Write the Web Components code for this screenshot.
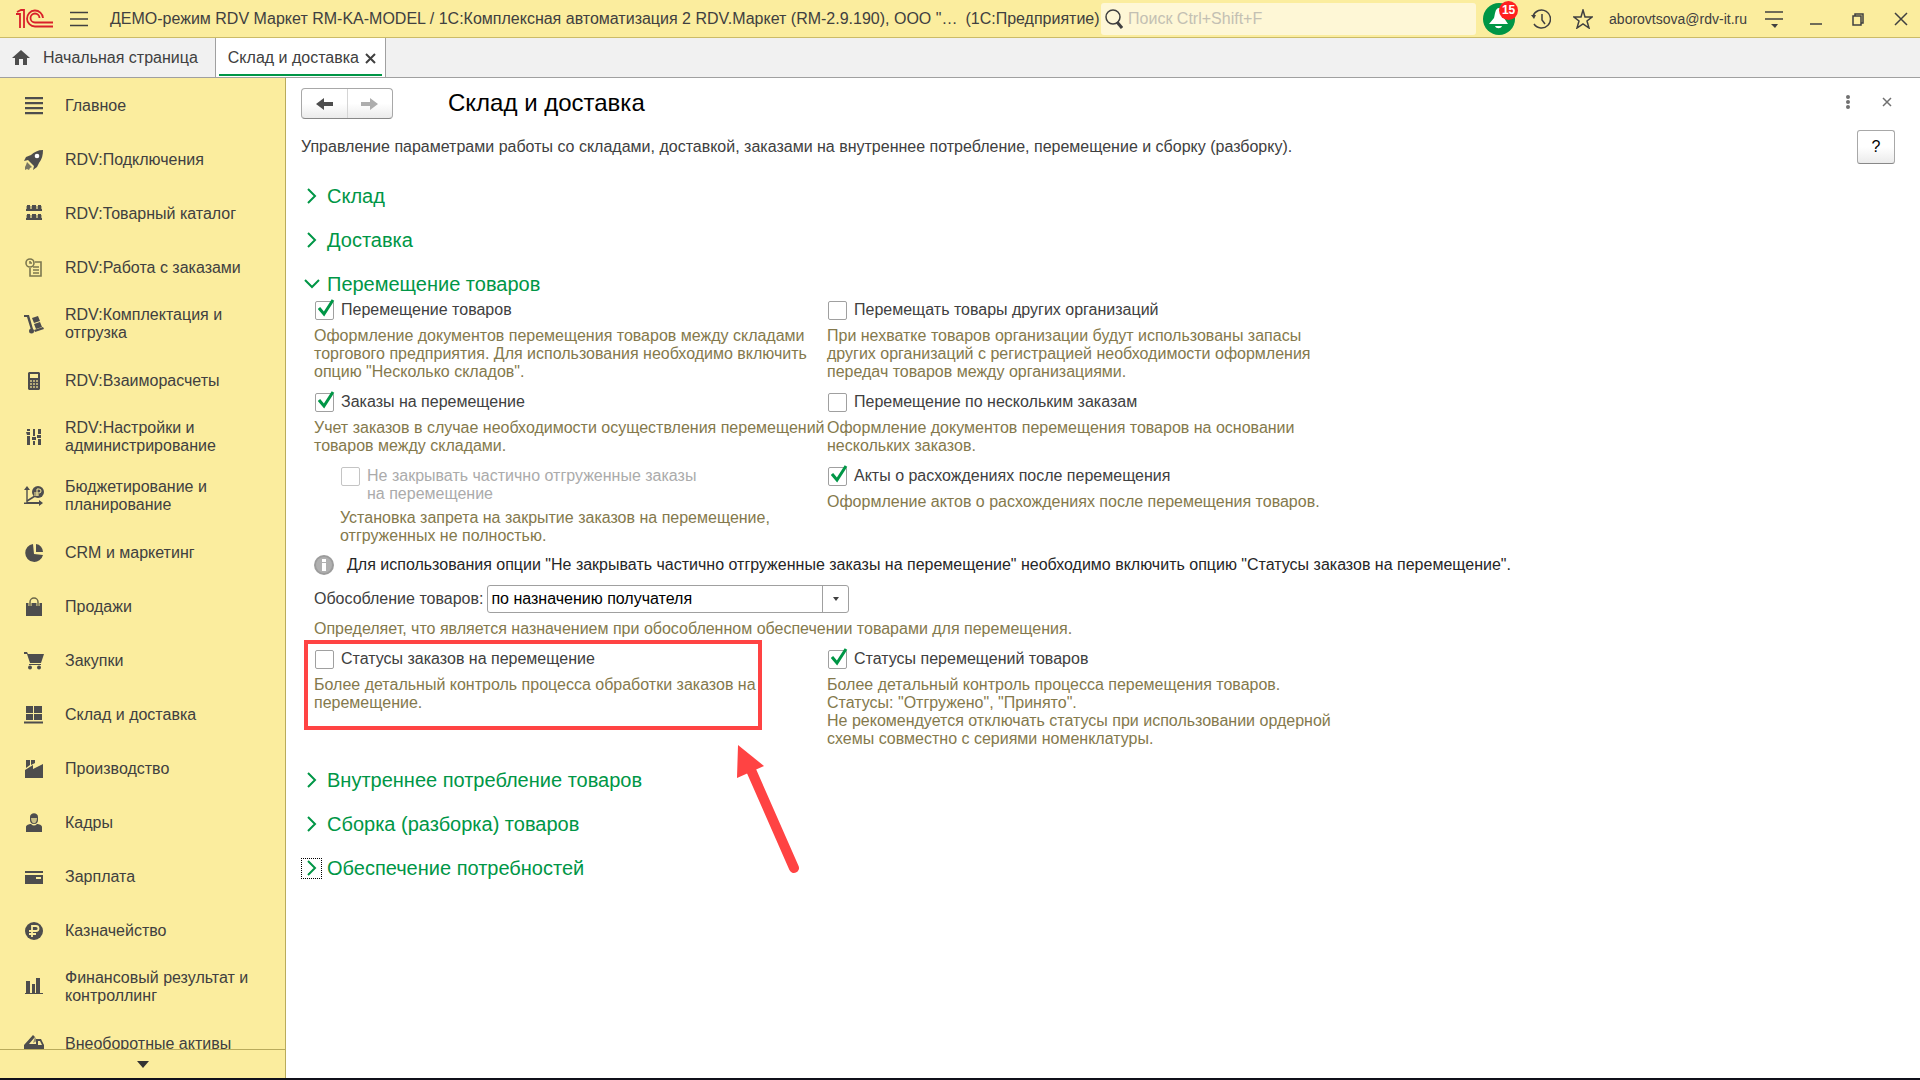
<!DOCTYPE html>
<html lang="ru">
<head>
<meta charset="utf-8">
<title>Склад и доставка</title>
<style>
  html, body { height: 100%; margin: 0; }
  body {
    font: 16px/18px "Liberation Sans", Arial, sans-serif;
    color: #404040;
    background: #fff;
  }
</style>
</head>
<body>
<app-shell>
  <title-bar slot="title" user="aborovtsova@rdv-it.ru" count="15">
    <span>ДЕМО-режим RDV Маркет RM-KA-MODEL / 1С:Комплексная автоматизация 2 RDV.Маркет (RM-2.9.190), ООО "…</span>
    <span>(1С:Предприятие)</span>
  </title-bar>

  <tab-bar slot="tabs">
    <tab-item icon="home">Начальная страница</tab-item>
    <tab-item active>Склад и доставка</tab-item>
  </tab-bar>

  <side-nav slot="nav">
    <nav-item icon="list">Главное</nav-item>
    <nav-item icon="rocket">RDV:Подключения</nav-item>
    <nav-item icon="shelves">RDV:Товарный каталог</nav-item>
    <nav-item icon="orders">RDV:Работа с заказами</nav-item>
    <nav-item icon="trolley">RDV:Комплектация и отгрузка</nav-item>
    <nav-item icon="calculator">RDV:Взаиморасчеты</nav-item>
    <nav-item icon="sliders">RDV:Настройки и администрирование</nav-item>
    <nav-item icon="plan">Бюджетирование и планирование</nav-item>
    <nav-item icon="pie">CRM и маркетинг</nav-item>
    <nav-item icon="bag">Продажи</nav-item>
    <nav-item icon="cart">Закупки</nav-item>
    <nav-item icon="boxes">Склад и доставка</nav-item>
    <nav-item icon="factory">Производство</nav-item>
    <nav-item icon="person">Кадры</nav-item>
    <nav-item icon="card">Зарплата</nav-item>
    <nav-item icon="ruble">Казначейство</nav-item>
    <nav-item icon="bars">Финансовый результат и контроллинг</nav-item>
    <nav-item icon="truck">Внеоборотные активы</nav-item>
  </side-nav>

  <settings-page heading="Склад и доставка">
    <span slot="about">Управление параметрами работы со складами, доставкой, заказами на внутреннее потребление, перемещение и сборку (разборку).</span>

    <settings-group heading="Склад"></settings-group>
    <settings-group heading="Доставка"></settings-group>
    <settings-group heading="Перемещение товаров" open>
      <option-columns>
        <setting-option label="Перемещение товаров" checked>Оформление документов перемещения товаров между складами торгового предприятия. Для использования необходимо включить опцию "Несколько складов".</setting-option>
        <setting-option label="Заказы на перемещение" checked>Учет заказов в случае необходимости осуществления перемещений товаров между складами.</setting-option>
        <setting-option label="Не закрывать частично отгруженные заказы на перемещение" disabled nested>Установка запрета на закрытие заказов на перемещение, отгруженных не полностью.</setting-option>
        <setting-option slot="second" label="Перемещать товары других организаций">При нехватке товаров организации будут использованы запасы других организаций с регистрацией необходимости оформления передач товаров между организациями.</setting-option>
        <setting-option slot="second" label="Перемещение по нескольким заказам">Оформление документов перемещения товаров на основании нескольких заказов.</setting-option>
        <setting-option slot="second" label="Акты о расхождениях после перемещения" checked>Оформление актов о расхождениях после перемещения товаров.</setting-option>
      </option-columns>

      <info-note>Для использования опции "Не закрывать частично отгруженные заказы на перемещение" необходимо включить опцию "Статусы заказов на перемещение".</info-note>

      <setting-select label="Обособление товаров:" value="по назначению получателя">Определяет, что является назначением при обособленном обеспечении товарами для перемещения.</setting-select>

      <option-columns>
        <setting-option label="Статусы заказов на перемещение" marked>Более детальный контроль процесса обработки заказов на<br>перемещение.</setting-option>
        <setting-option slot="second" label="Статусы перемещений товаров" checked>Более детальный контроль процесса перемещения товаров.<br>Статусы: "Отгружено", "Принято".<br>Не рекомендуется отключать статусы при использовании ордерной схемы совместно с сериями номенклатуры.</setting-option>
      </option-columns>
    </settings-group>
    <settings-group heading="Внутреннее потребление товаров"></settings-group>
    <settings-group heading="Сборка (разборка) товаров"></settings-group>
    <settings-group heading="Обеспечение потребностей" current></settings-group>
  </settings-page>
</app-shell>

<script>
// Menu icons, all on a 20x20 grid
const icons = {
  list: '<path d="M1 1h18v2.300H1zM1 6h18v2.300H1zM1 11h18v2.300H1zM1 16h18v2.300H1z"/>',
  rocket: '<path d="M19 0c-5 0-9 2-12 5L2 7 0 11l4-1 6 6-1 4 4-3 2-4c3-4 4-8 4-13z"/><path d="M3 12l5 5-2 1-1 2-2-1-2 1 0-3 1-2z" opacity=".75"/><circle cx="13" cy="6" r="2.300" fill="#fff"/>',
  shelves: '<path d="M3 1h3v5H3zM8 1h4v5H8zM14 1h3v5h-3zM3 10h3v5H3zM8 10h4v5H8zM14 10h3v5h-3z"/><path d="M2 5h16v2H2zM2 14h16v2H2z"/><path d="M2 2h16v4H2zM2 11h16v4H2z" opacity=".4"/>',
  orders: '<g fill="none" stroke="#7c774f" stroke-width="1.600"><circle cx="6" cy="5" r="4"/><path d="M6 3v2h2M11 4h6v14H6v-8M9 9h6M9 12h6M9 15h6"/></g>',
  trolley: '<path d="M0 1h5l4 14-2 1L3 3H0z"/><path d="M8 4l6-2 2 5-6 2zM10 10l6-2 2 5-6 2z"/><path d="M10 16l9-3 1 2-9 3z"/><circle cx="7.500" cy="17" r="2.500"/>',
  calculator: '<path fill-rule="evenodd" d="M5 1h10l1 1v16l-1 1H5l-1-1V2zM6 3v4h8V3z"/><path d="M6 9h2v2H6zM9 9h2v2H9zM12 9h2v2h-2zM6 12h2v2H6zM9 12h2v2H9zM12 12h2v2h-2zM6 15h2v2H6zM9 15h2v2H9zM12 15h2v2h-2z" fill="#b5ab78"/>',
  sliders: '<path d="M3 2h3v2H3zM2 5h4v3H3zM3 9h3v9H3zM9 2h2v7H9zM8 10h4v3H8zM9 14h2v4H9zM14 2h3v5h-3zM13 8h4v3h-4zM14 12h3v6h-3z"/>',
  plan: '<path d="M3 0l3 4H3.700v12H15v-2l4 3-4 3v-2H0v-1.500h2.300V4H0z"/><path d="M3 15l8-5" stroke="#4d4d4d" stroke-width="1.500"/><circle cx="14" cy="6" r="6"/><path d="M13 10V3h2a2 2 0 0 1 0 4h-5M10 9h5" fill="none" stroke="#fbed9e"/>',
  pie: '<path d="M9 1a9 9 0 1 0 10 11l-9-1z"/><path d="M12 1a8 8 0 0 1 7 8h-7z"/>',
  bag: '<path d="M2 6h16v13H2z"/><path d="M6 9V5a4 4 0 0 1 8 0v4" fill="none" stroke="#fbed9e" stroke-width="3"/><path d="M6 9V5a4 4 0 0 1 8 0v4" fill="none" stroke="#6b6749" stroke-width="1.500"/>',
  cart: '<path d="M0 1h3l1 2h16l-3 9H6L3 3H0zM5 13h12v1H5z"/><circle cx="6" cy="16.500" r="2"/><circle cx="15" cy="16.500" r="2"/>',
  boxes: '<path d="M2 1h7v7H2zM10 1h8v7h-8zM2 9h7v6H2zM10 9h8v6h-8zM0 16.500h19v2H0z"/>',
  factory: '<path d="M1 19V11l8-5v4l10-5v14zM2 1h4v5l-4 3zM7 1h4v3l-4 2z"/>',
  person: '<path d="M6 4c0-5 8-5 8 0v3c0 2-1 4-4 4S6 9 6 7zM2 19v-5c0-2 3-3 5-3 2 2 4 2 6 0 2 0 5 1 5 3v5z"/><path d="M7 5h6c0 7-6 7-6 0z" fill="#c9bf83"/>',
  card: '<path fill-rule="evenodd" d="M1 4h18v2H1zM1 8h18v9H1zM12 10v2h5v-2z"/>',
  ruble: '<circle cx="10" cy="10" r="9"/><path d="M8 16V5h4a2.500 2.500 0 0 1 0 5H5M5 13h7" fill="none" stroke="#fbed9e" stroke-width="1.800"/>',
  bars: '<path d="M2 4h4v12H2zM8 7h3v9H8zM12 1h4v15h-4zM1 16h18v1H1z"/>',
  truck: '<path d="M0 11l9-10 2 2-6 7h7V5h5l3 6v6h-2a3 3 0 0 0-5 0H8a3 3 0 0 0-5 0H0zM14 7v4h4l-2-4z" fill-rule="evenodd"/><path d="M11 3l2 4-4 2z" opacity=".6"/>',
  home: '<path d="M10 2l9 8h-3v7h-4v-6H8v6H4v-7H1z"/>'
};

class AppIcon extends HTMLElement {
  constructor() {
    super();
    this.attachShadow({ mode: 'open' });
  }

  connectedCallback() {
    this.shadowRoot.innerHTML = `
      <style>
        :host { display: block; flex: none; width: 20px; height: 20px; }
        svg { display: block; fill: #4d4d4d; }
      </style>
      <svg width="20" height="20" viewBox="0 0 20 20" aria-hidden="true">${icons[this.getAttribute('name')]}</svg>
    `;
  }
}
customElements.define('app-icon', AppIcon);

class AppShell extends HTMLElement {
  constructor() {
    super();
    this.attachShadow({ mode: 'open' }).innerHTML = `
      <style>
        :host {
          display: grid;
          box-sizing: border-box;
          height: 100vh;
          grid-template: auto auto minmax(0, 1fr) / 286px minmax(0, 1fr);
          border-bottom: 2px solid #10101a;
        }
        header, nav, main { min-width: 0; min-height: 0; }
        .wide { grid-column: 1 / -1; }
        nav { display: flex; }
      </style>
      <header class="wide"><slot name="title"></slot></header>
      <div class="wide"><slot name="tabs"></slot></div>
      <nav><slot name="nav"></slot></nav>
      <main><slot></slot></main>
    `;
  }
}
customElements.define('app-shell', AppShell);

class TitleBar extends HTMLElement {
  constructor() {
    super();
    this.attachShadow({ mode: 'open' });
  }

  connectedCallback() {
    this.shadowRoot.innerHTML = `
      <style>
        :host {
          display: grid;
          grid-template-columns: minmax(0, 1fr) 375px auto;
          align-items: center;
          height: 37px;
          background: #fbed9e;
          border-bottom: 1px solid #cbbb68;
        }
        button { padding: 0; border: 0; background: none; font: inherit; color: inherit; }
        svg { display: block; fill: none; stroke: #404040; }
        .left, .right, .caption { display: flex; align-items: center; }
        .left { gap: 16px; padding-left: 16px; }
        .caption { gap: 8px; min-width: 0; padding-left: 6px; overflow: hidden; white-space: nowrap; }
        .search {
          display: flex;
          align-items: center;
          gap: 5px;
          height: 32px;
          padding-left: 4px;
          border-radius: 3px;
          background: #fef7d6;
        }
        input { flex: 1; min-width: 0; padding: 0; border: 0; background: none; font: inherit; outline: 0; }
        input::placeholder { color: #c3c0b3; opacity: 1; }
        .right { padding: 0 12px 0 7px; }
        .user { font-size: 14px; }
        .bell { position: relative; margin-right: 16px; }
        .badge {
          position: absolute;
          top: -2px;
          right: -3px;
          width: 19px;
          height: 19px;
          border-radius: 50%;
          background: #ff2020;
          color: #fff;
          font: bold 12px/19px "Liberation Sans", Arial, sans-serif;
          text-align: center;
        }
        .history { margin-right: 22px; }
        .star { margin-right: 16px; }
        .menu { margin: 0 27px 0 18px; }
        .min, .max { margin-right: 30px; }
      </style>
      <div class="left">
        <svg width="38" height="20" viewBox="0 0 38 20" role="img" aria-label="1С" style="stroke:#d9202a;stroke-width:1.800">
          <path d="M0 5h4v14M1 3l4-2h3v18"/>
          <path d="M27 9a8 8 0 1 0-8 8.500h18M23.500 9a4.500 4.500 0 1 0-4.500 4.500h18"/>
        </svg>
        <button aria-label="Меню"><svg width="18" height="16" stroke-width="1.500"><path d="M0 1.500h18M0 8h18M0 14.500h18"/></svg></button>
        <div class="caption"><slot></slot></div>
      </div>
      <label class="search">
        <svg width="18" height="20" stroke-width="2"><circle cx="8" cy="8" r="7" stroke-width="1.500"/><path d="M12 13l5 6" stroke-width="3"/></svg>
        <input type="search" placeholder="Поиск Ctrl+Shift+F" aria-label="Поиск">
      </label>
      <div class="right">
        <button class="bell" aria-label="Уведомления">
          <svg width="32" height="32" style="stroke:none"><circle cx="16" cy="16" r="16" fill="#009646"/><path d="M16 5c-4 0-4 7-5 10l-5 6h19l-4-6c-1-3-1-10-5-10zM12 23h7c-1 3-6 3-7 0z" fill="#fff"/></svg>
          <span class="badge"></span>
        </button>
        <button class="history" aria-label="История"><svg width="20" height="20" stroke-width="1.500"><path d="M2 7a9 9 0 1 1 1 8M11 5v6l3 4"/><path d="M0 6l5 0-2 4z" fill="#404040" stroke="none"/></svg></button>
        <button class="star" aria-label="Избранное"><svg width="20" height="20" stroke-width="1.500"><path d="M10 1l2 7h7l-5 4 2 7-6-4-6 4 2-7-5-4h7z"/></svg></button>
        <span class="user"></span>
        <button class="menu" aria-label="Настройки"><svg width="18" height="18" stroke-width="1.500"><path d="M0 2h18M0 9h18"/><path d="M6 14h7l-3 4z" fill="#404040" stroke="none"/></svg></button>
        <button class="min" aria-label="Свернуть"><svg width="12" height="12" stroke-width="1.500"><path d="M0 11h12"/></svg></button>
        <button class="max" aria-label="Развернуть"><svg width="12" height="14"><path d="M1 4h8v9H1zM3 4V2h8v9H9" stroke-width="1.500"/></svg></button>
        <button aria-label="Закрыть"><svg width="14" height="14" stroke-width="1.500"><path d="M1 1l12 12M13 1L1 13"/></svg></button>
      </div>
    `;
    this.shadowRoot.querySelector('.badge').textContent = this.getAttribute('count');
    this.shadowRoot.querySelector('.user').textContent = this.getAttribute('user');
  }
}
customElements.define('title-bar', TitleBar);

class TabBar extends HTMLElement {
  constructor() {
    super();
    this.attachShadow({ mode: 'open' }).innerHTML = `
      <style>
        :host { display: flex; height: 39px; background: #f1f1f1; border-bottom: 1px solid #a0a0a0; }
      </style>
      <slot></slot>
    `;
  }
}
customElements.define('tab-bar', TabBar);

class TabItem extends HTMLElement {
  constructor() {
    super();
    this.attachShadow({ mode: 'open' });
  }

  connectedCallback() {
    const icon = this.getAttribute('icon');
    this.shadowRoot.innerHTML = `
      <style>
        :host { display: flex; align-items: center; padding: 0 17px 0 11px; }
        :host([active]) {
          padding: 0 3px;
          background: #fff;
          border: solid #a0a0a0;
          border-width: 0 1px;
        }
        .tab { display: flex; align-items: center; gap: 12px; box-sizing: border-box; height: 100%; }
        :host([active]) .tab {
          gap: 6px;
          height: 37px;
          padding: 3px 6px 0 9px;
          border-bottom: 2px solid #009646;
        }
        button { padding: 0; border: 0; background: none; font: inherit; color: inherit; }
        svg { display: block; }
      </style>
      <div class="tab">
        ${icon ? `<app-icon name="${icon}"></app-icon>` : ''}
        <button><slot></slot></button>
        ${this.hasAttribute('active') ? '<button class="close" aria-label="Закрыть"><svg width="11" height="11" stroke="#404040" stroke-width="2"><path d="M1 1l9 9M10 1l-9 9"/></svg></button>' : ''}
      </div>
    `;
  }
}
customElements.define('tab-item', TabItem);

class SideNav extends HTMLElement {
  constructor() {
    super();
    this.attachShadow({ mode: 'open' }).innerHTML = `
      <style>
        :host {
          display: flex;
          flex: 1;
          flex-direction: column;
          min-height: 0;
          background: #fbed9e;
          border-right: 1px solid #b9ab5c;
        }
        .items { flex: 1; min-height: 0; overflow: hidden; }
        .more {
          display: grid;
          place-items: center;
          height: 29px;
          padding: 0;
          border: 0;
          border-top: 1px solid #b9ab5c;
          background: none;
        }
      </style>
      <div class="items"><slot></slot></div>
      <button class="more" aria-label="Ещё"><svg width="12" height="7" fill="#333"><path d="M0 0h12L6 7z"/></svg></button>
    `;
    this.$items = this.shadowRoot.querySelector('.items');
    this.shadowRoot.querySelector('.more').addEventListener('click', this.onMore.bind(this));
  }

  onMore() {
    this.$items.scrollTop += 54;
  }
}
customElements.define('side-nav', SideNav);

class NavItem extends HTMLElement {
  constructor() {
    super();
    this.attachShadow({ mode: 'open' });
  }

  connectedCallback() {
    this.shadowRoot.innerHTML = `
      <style>
        :host { display: block; }
        a {
          display: flex;
          align-items: center;
          gap: 21px;
          box-sizing: border-box;
          min-height: 54px;
          padding: 12px 30px 11px 24px;
          color: inherit;
          text-decoration: none;
        }
      </style>
      <a href="#"><app-icon name="${this.getAttribute('icon')}"></app-icon><span><slot></slot></span></a>
    `;
  }
}
customElements.define('nav-item', NavItem);

class SettingsPage extends HTMLElement {
  constructor() {
    super();
    this.attachShadow({ mode: 'open' });
  }

  connectedCallback() {
    this.shadowRoot.innerHTML = `
      <style>
        :host { display: block; padding: 10px 25px 20px 15px; }
        .toolbar, .about, .history { display: flex; align-items: center; }
        .toolbar { height: 31px; margin-bottom: 10px; }
        .history {
          box-sizing: border-box;
          height: 31px;
          border: 1px solid #a8a8a8;
          border-bottom-color: #888;
          border-radius: 4px;
          background: linear-gradient(#fff 50%, #ebebeb);
        }
        .history button { display: grid; place-items: center; width: 45px; height: 29px; }
        .history button + button { border-left: 1px solid #d5d5d5; }
        button { padding: 0; border: 0; background: none; font: inherit; color: inherit; }
        h1 { flex: 1; margin: 0 0 2px 55px; font: 24px/28px "Liberation Sans", Arial, sans-serif; color: #000; }
        .actions { display: flex; align-items: center; gap: 32px; padding: 0 3px 4px 0; }
        .about { justify-content: space-between; height: 35px; }
        .help {
          width: 38px;
          height: 34px;
          border: 1px solid #a8a8a8;
          border-bottom-color: #888;
          border-radius: 3px;
          background: linear-gradient(#fff 50%, #ebebeb);
          color: #000;
        }
        svg { display: block; }
      </style>
      <div class="toolbar">
        <div class="history">
          <button aria-label="Назад"><svg width="18" height="14" fill="#4d4d4d"><path d="M0 7l8-6v4h9v4H8v4z"/></svg></button>
          <button aria-label="Вперёд"><svg width="18" height="14" fill="#adadad"><path d="M17 7l-8-6v4H0v4h9v4z"/></svg></button>
        </div>
        <h1></h1>
        <div class="actions">
          <button aria-label="Ещё"><svg width="4" height="14" fill="#707070"><circle cx="2" cy="2" r="2"/><circle cx="2" cy="7" r="2"/><circle cx="2" cy="12" r="2"/></svg></button>
          <button aria-label="Закрыть"><svg width="10" height="10" stroke="#707070" stroke-width="1.500"><path d="M1 1l8 8M9 1L1 9"/></svg></button>
        </div>
      </div>
      <div class="about"><slot name="about"></slot><button class="help">?</button></div>
      <slot></slot>
    `;
    this.shadowRoot.querySelector('h1').textContent = this.getAttribute('heading');
  }
}
customElements.define('settings-page', SettingsPage);

class SettingsGroup extends HTMLElement {
  constructor() {
    super();
    this.attachShadow({ mode: 'open' });
  }

  connectedCallback() {
    this.shadowRoot.innerHTML = `
      <style>
        :host { display: block; margin-top: 20px; }
        h2 { margin: 0; font: 20px/24px "Liberation Sans", Arial, sans-serif; }
        button {
          display: flex;
          align-items: center;
          gap: 5px;
          padding: 0;
          border: 0;
          background: none;
          font: inherit;
          color: #009646;
        }
        .mark { display: grid; place-items: center; box-sizing: border-box; width: 21px; height: 21px; border: 1px solid transparent; }
        :host([current]) .mark { border: 1px dotted #000; }
        svg { display: block; fill: none; stroke: #009646; stroke-width: 2; }
        :host([open]) svg { transform: rotate(90deg); }
        .body { padding: 1px 0 0 13px; }
        :host(:not([open])) .body { display: none; }
      </style>
      <h2><button><span class="mark"><svg width="16" height="16"><path d="M4 1l7 7-7 7"/></svg></span><span class="name"></span></button></h2>
      <div class="body"><slot></slot></div>
    `;
    this.shadowRoot.querySelector('.name').textContent = this.getAttribute('heading');
    this.shadowRoot.querySelector('button').addEventListener('click', this.onToggle.bind(this));
  }

  onToggle() {
    this.toggleAttribute('open');
  }
}
customElements.define('settings-group', SettingsGroup);

class OptionColumns extends HTMLElement {
  constructor() {
    super();
    this.attachShadow({ mode: 'open' }).innerHTML = `
      <style>
        :host { display: grid; grid-template-columns: repeat(2, minmax(0, 513px)); }
        .column { display: flex; flex-direction: column; gap: 8px; }
      </style>
      <div class="column"><slot></slot></div>
      <div class="column"><slot name="second"></slot></div>
    `;
  }
}
customElements.define('option-columns', OptionColumns);

class SettingOption extends HTMLElement {
  constructor() {
    super();
    this.attachShadow({ mode: 'open' });
  }

  connectedCallback() {
    this.shadowRoot.innerHTML = `
      <style>
        :host { display: block; position: relative; }
        :host([nested]) { padding: 0 40px 0 26px; }
        .head { display: flex; gap: 7px; box-sizing: border-box; min-height: 26px; padding: 4px 0 2px 1px; }
        .box { position: relative; flex: none; width: 19px; height: 19px; }
        input {
          appearance: none;
          display: block;
          box-sizing: border-box;
          width: 19px;
          height: 19px;
          margin: 0;
          border: 1px solid #a0a0a0;
          border-radius: 2px;
          background: #fff;
        }
        input:disabled { border-color: #c4c4c4; }
        :host([nested]) label { max-width: 340px; }
        :host([disabled]) label { color: #ababab; }
        .tick { display: none; position: absolute; left: 3px; top: -2px; pointer-events: none; }
        input:checked + .tick { display: block; }
        .hint { margin-top: 4px; color: #84794c; }
      </style>
      <div class="head">
        <span class="box">
          <input type="checkbox" id="flag">
          <svg class="tick" width="18" height="18" fill="none" stroke="#009646" stroke-width="3"><path d="M1 9l5 6L15 1"/></svg>
        </span>
        <label for="flag"></label>
      </div>
      <div class="hint"><slot></slot></div>
      ${this.hasAttribute('marked') ? '<callout-mark></callout-mark>' : ''}
    `;
    this.$flag = this.shadowRoot.querySelector('input');
    this.$flag.checked = this.hasAttribute('checked');
    this.$flag.disabled = this.hasAttribute('disabled');
    this.shadowRoot.querySelector('label').textContent = this.getAttribute('label');
  }
}
customElements.define('setting-option', SettingOption);

// Red frame with an arrow, laid over an option
class CalloutMark extends HTMLElement {
  constructor() {
    super();
    this.attachShadow({ mode: 'open' }).innerHTML = `
      <style>
        :host { position: absolute; left: -10px; top: -6px; pointer-events: none; }
        svg { display: block; }
      </style>
      <svg width="500" height="240" fill="none" stroke="#ff4343">
        <rect x="2" y="2" width="454" height="86" stroke-width="4"/>
        <path d="M447 130l43 98" stroke-width="10" stroke-linecap="round"/>
        <path d="M434 105l26 21-27 12z" fill="#ff4343" stroke="none"/>
      </svg>
    `;
  }
}
customElements.define('callout-mark', CalloutMark);

class InfoNote extends HTMLElement {
  constructor() {
    super();
    this.attachShadow({ mode: 'open' }).innerHTML = `
      <style>
        :host { display: flex; align-items: center; gap: 13px; height: 24px; margin: 8px 0; color: #262626; }
        svg { flex: none; }
      </style>
      <svg width="20" height="20"><circle cx="10" cy="10" r="10" fill="#9c9c9c"/><circle cx="10" cy="10" r="8" fill="#b0b0b0"/><path d="M8 8h4v8H8zM8 4h4v3H8z" fill="#fff"/></svg>
      <span><slot></slot></span>
    `;
  }
}
customElements.define('info-note', InfoNote);

class SettingSelect extends HTMLElement {
  constructor() {
    super();
    this.attachShadow({ mode: 'open' });
  }

  connectedCallback() {
    const value = this.getAttribute('value');
    this.shadowRoot.innerHTML = `
      <style>
        :host { display: block; margin-bottom: 8px; }
        .row { display: flex; align-items: center; gap: 4px; }
        .field { position: relative; width: 362px; }
        select {
          appearance: none;
          display: block;
          box-sizing: border-box;
          width: 100%;
          height: 28px;
          padding: 0 30px 0 3px;
          border: 1px solid #a0a0a0;
          border-radius: 3px;
          background: #fff;
          font: inherit;
          color: #000;
        }
        .arrow {
          position: absolute;
          top: 1px;
          right: 1px;
          display: grid;
          place-items: center;
          width: 25px;
          height: 26px;
          border-left: 1px solid #a0a0a0;
          pointer-events: none;
        }
        .hint { margin-top: 7px; color: #84794c; }
      </style>
      <div class="row">
        <label for="choice">${this.getAttribute('label')}</label>
        <div class="field">
          <select id="choice"><option>${value}</option></select>
          <span class="arrow"><svg width="6" height="4" fill="#404040"><path d="M0 0h6L3 4z"/></svg></span>
        </div>
      </div>
      <div class="hint"><slot></slot></div>
    `;
  }
}
customElements.define('setting-select', SettingSelect);
</script>
</body>
</html>
